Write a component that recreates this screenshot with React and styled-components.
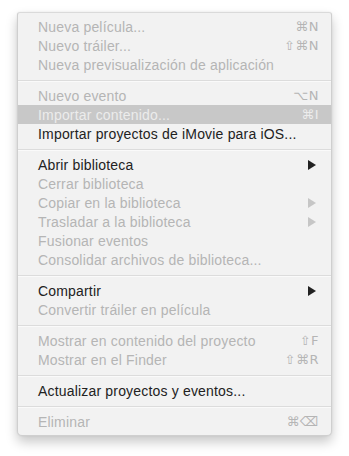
import React from "react";
import styled, { createGlobalStyle } from "styled-components";

const GlobalStyle = createGlobalStyle`
  html, body {
    margin: 0;
    padding: 0;
    background: #fff;
  }
  body {
    width: 349px;
    height: 456px;
    overflow: hidden;
    font-family: "Liberation Sans", "DejaVu Sans", Arial, sans-serif;
  }
`;

const Page = styled.div`
  padding: 12px 17px 0 17px;
`;

const Menu = styled.div`
  width: 315px;
  box-sizing: border-box;
  padding: 4px 0;
  background: #f2f2f2;
  border: 1px solid #cfcfcf;
  border-top-color: #dadada;
  border-radius: 3px 3px 5px 5px;
  box-shadow: 0 6px 12px rgba(0, 0, 0, 0.22), 0 0 2px rgba(0, 0, 0, 0.08);
`;

const Row = styled.div`
  display: flex;
  align-items: center;
  height: 19px;
  padding: 0 12px 0 20px;
  font-size: 14px;
  letter-spacing: 0.18px;
  color: ${(p) => (p.$active ? "#ececec" : p.$enabled ? "#222" : "#b5b5b5")};
  background: ${(p) => (p.$active ? "#c8c8c8" : "transparent")};
`;

const Label = styled.span`
  flex: 1;
  white-space: nowrap;
`;

const Shortcut = styled.span`
  font-family: "DejaVu Sans", "Liberation Sans", sans-serif;
  font-size: 13px;
  letter-spacing: 0.5px;
`;

const Arrow = styled.span`
  width: 0;
  height: 0;
  margin-right: 3px;
  border-top: 5px solid transparent;
  border-bottom: 5px solid transparent;
  border-left: 8px solid ${(p) => (p.$enabled ? "#222" : "#c6c6c6")};
`;

const Separator = styled.div`
  height: 12px;
  display: flex;
  align-items: center;
  &::after {
    content: "";
    flex: 1;
    height: 1px;
    background: #dcdcdc;
    box-shadow: 0 1px 0 #fafafa;
  }
`;

const groups = [
  [
    { label: "Nueva película...", key: "⌘N" },
    { label: "Nuevo tráiler...", key: "⇧⌘N" },
    { label: "Nueva previsualización de aplicación" },
  ],
  [
    { label: "Nuevo evento", key: "⌥N" },
    { label: "Importar contenido...", key: "⌘I", active: true },
    { label: "Importar proyectos de iMovie para iOS...", enabled: true },
  ],
  [
    { label: "Abrir biblioteca", sub: true, enabled: true },
    { label: "Cerrar biblioteca" },
    { label: "Copiar en la biblioteca", sub: true },
    { label: "Trasladar a la biblioteca", sub: true },
    { label: "Fusionar eventos" },
    { label: "Consolidar archivos de biblioteca..." },
  ],
  [
    { label: "Compartir", sub: true, enabled: true },
    { label: "Convertir tráiler en película" },
  ],
  [
    { label: "Mostrar en contenido del proyecto", key: "⇧F" },
    { label: "Mostrar en el Finder", key: "⇧⌘R" },
  ],
  [{ label: "Actualizar proyectos y eventos...", enabled: true }],
  [{ label: "Eliminar", key: "⌘⌫" }],
];

function App() {
  return (
    <Page>
      <GlobalStyle />
      <Menu>
        {groups.map((items, gi) => (
          <React.Fragment key={gi}>
            {gi > 0 && <Separator />}
            {items.map((item) => (
              <Row key={item.label} $enabled={item.enabled} $active={item.active}>
                <Label>{item.label}</Label>
                {item.key && <Shortcut>{item.key}</Shortcut>}
                {item.sub && <Arrow $enabled={item.enabled} />}
              </Row>
            ))}
          </React.Fragment>
        ))}
      </Menu>
    </Page>
  );
}

export default App;
